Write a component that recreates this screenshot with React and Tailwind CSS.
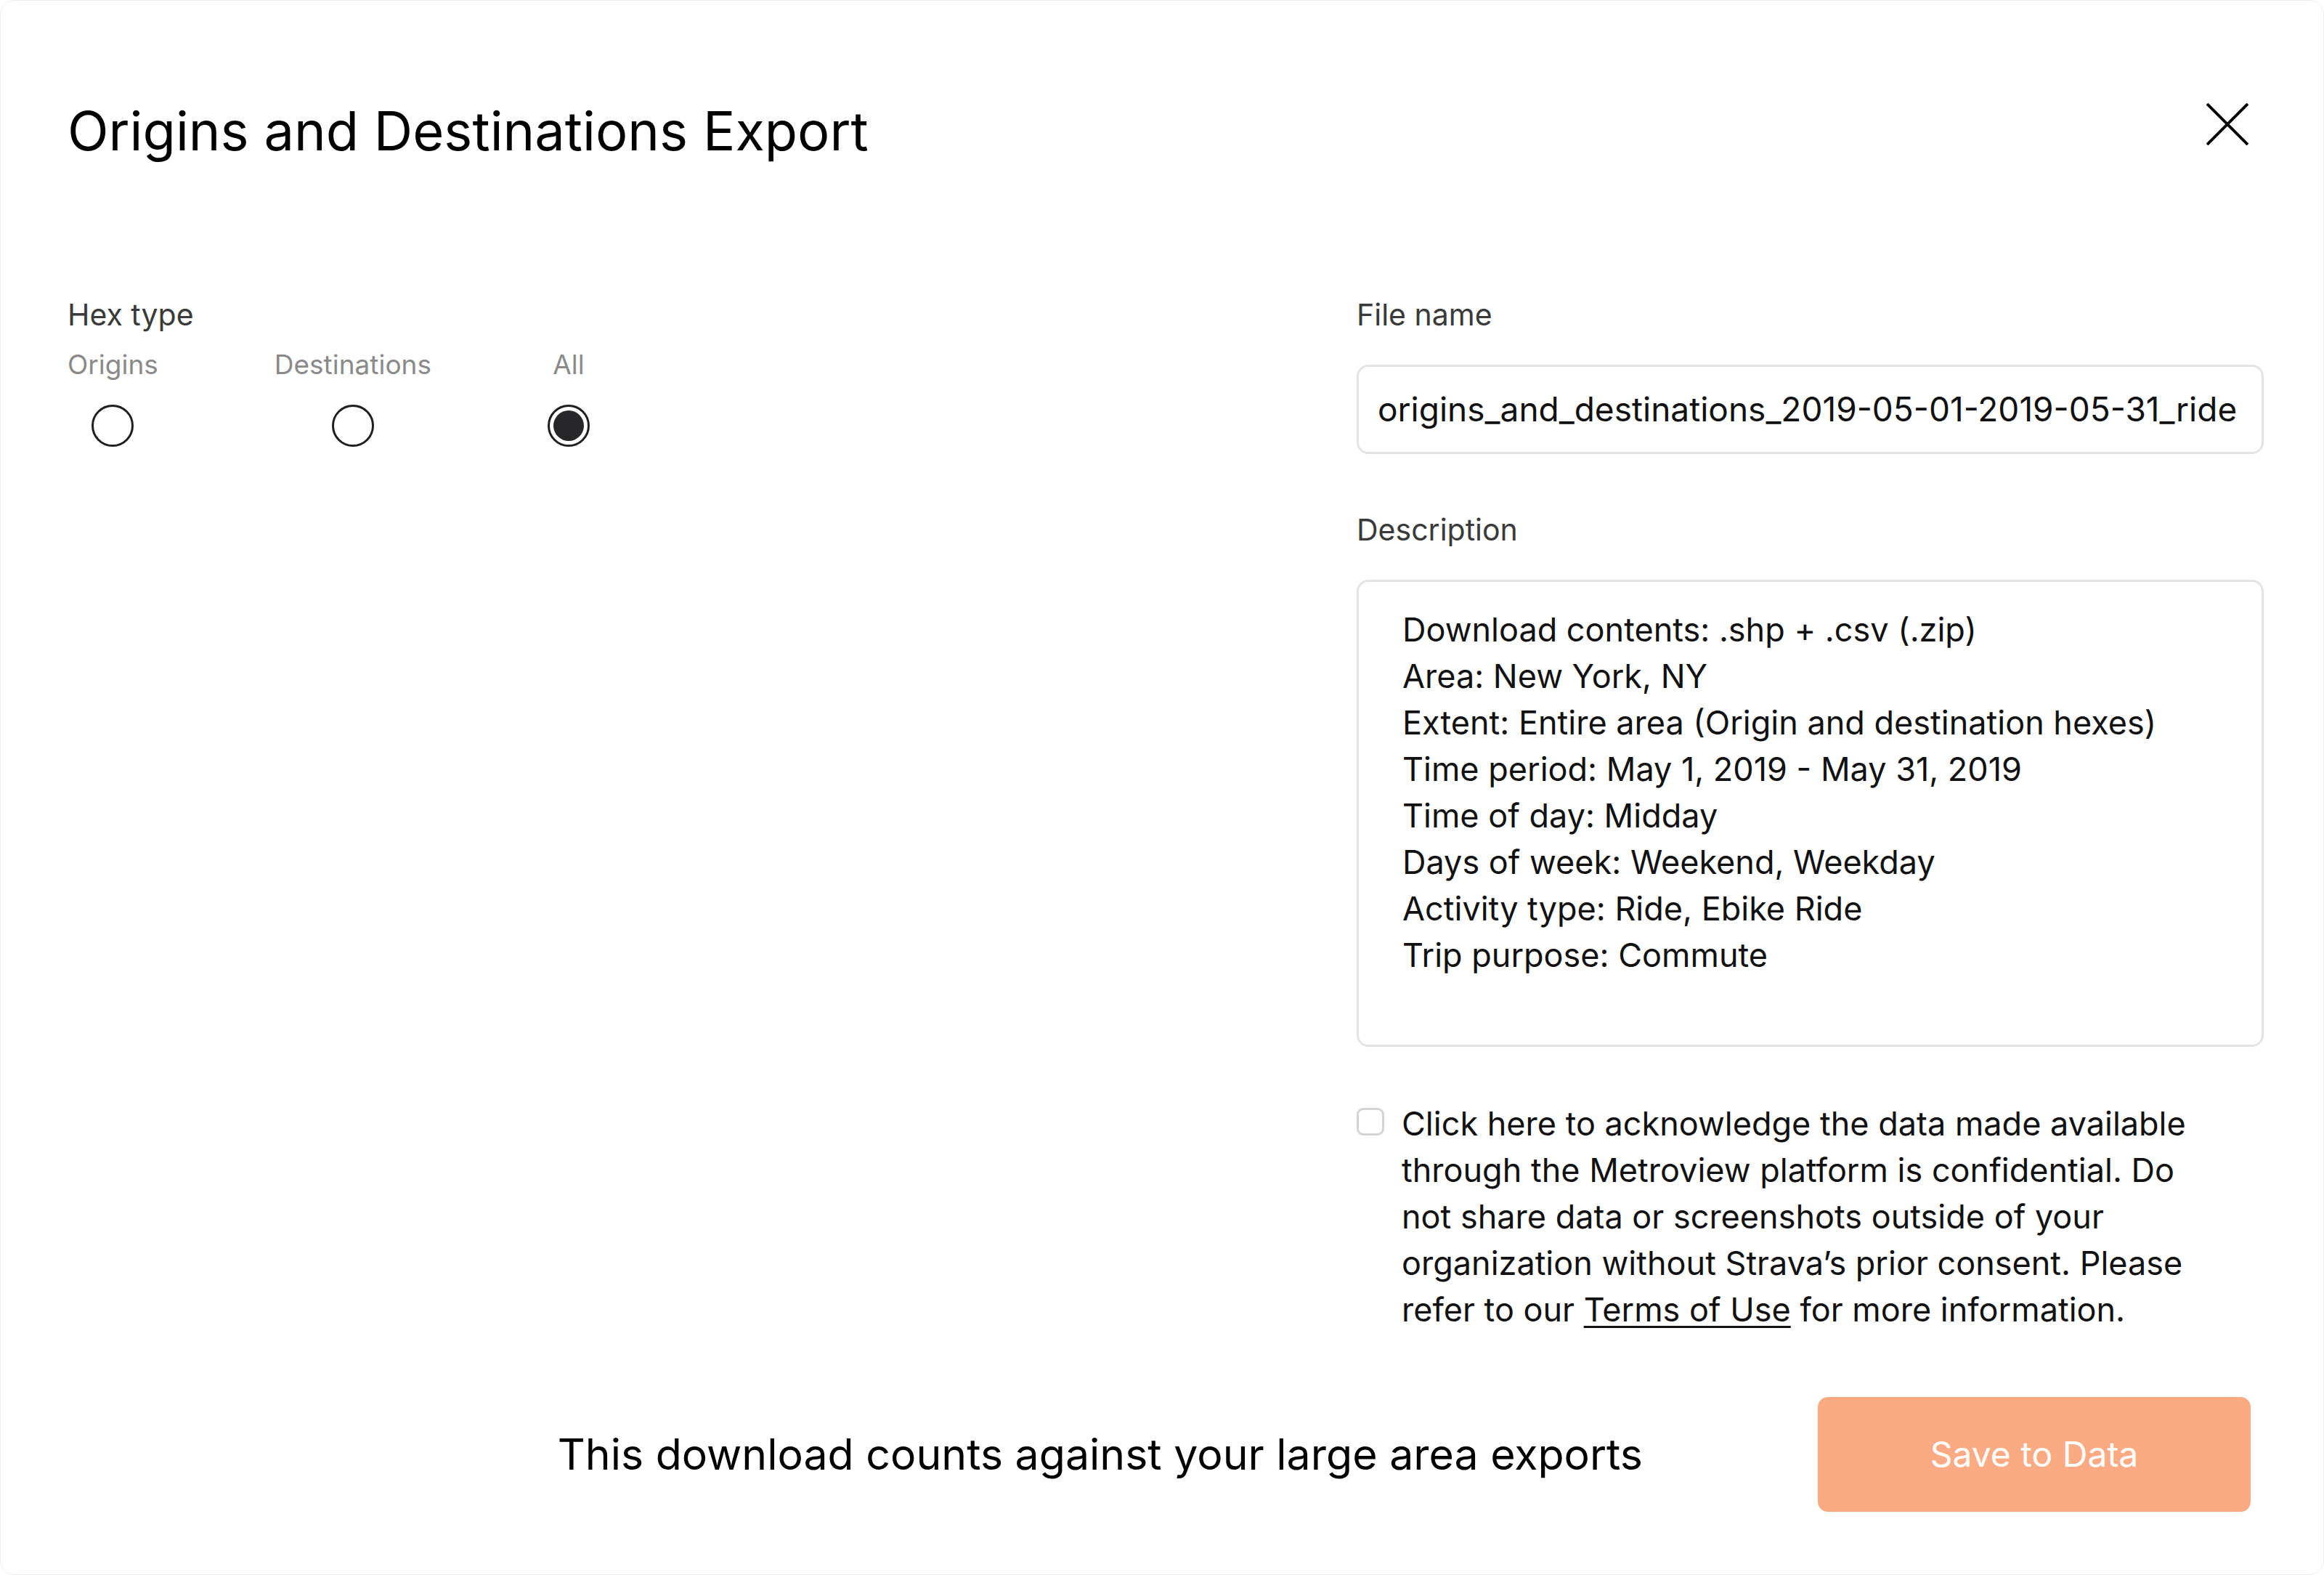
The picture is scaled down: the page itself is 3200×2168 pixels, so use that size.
import React, { useState } from "react";

const FONT = { fontFamily: "Inter, 'Noto Sans', 'Liberation Sans', sans-serif" };

function CloseIcon() {
  return (
    <svg width="58" height="58" viewBox="0 0 58 58" fill="none">
      <path d="M1 1 L57 57 M57 1 L1 57" stroke="#000" strokeWidth="4" />
    </svg>
  );
}

function Radio({ label, checked, onSelect }) {
  return (
    <button
      type="button"
      onClick={onSelect}
      className="flex flex-col items-center gap-[33px] bg-transparent p-0"
    >
      <span className="text-[37px] leading-[44px] text-[#8a8a8a]">{label}</span>
      <span className="flex h-[58px] w-[58px] items-center justify-center rounded-full border-[3px] border-[#1f1f22] bg-white">
        {checked && <span className="h-[42px] w-[42px] rounded-full bg-[#27272a]" />}
      </span>
    </button>
  );
}

const DESCRIPTION = [
  "Download contents: .shp + .csv (.zip)",
  "Area: New York, NY",
  "Extent: Entire area (Origin and destination hexes)",
  "Time period: May 1, 2019 - May 31, 2019",
  "Time of day: Midday",
  "Days of week: Weekend, Weekday",
  "Activity type: Ride, Ebike Ride",
  "Trip purpose: Commute",
];

export default function App() {
  const [hexType, setHexType] = useState("all");
  const [agreed, setAgreed] = useState(false);

  return (
    <div className="h-[2168px] w-[3200px] bg-white" style={FONT}>
      <div className="flex h-full w-full flex-col rounded-[20px] border border-[#eeeeee] bg-white">
        {/* Header */}
        <div className="flex items-start justify-between pl-[92px] pr-[103px] pt-[134px]">
          <h1 className="text-[74px] font-normal leading-[90px] text-black">
            Origins and Destinations Export
          </h1>
          <button type="button" className="mt-[7px] bg-transparent p-0">
            <CloseIcon />
          </button>
        </div>

        {/* Body */}
        <div className="mt-[184px] flex justify-between pl-[92px] pr-[82px]">
          {/* Hex type */}
          <div className="flex flex-col">
            <div className="text-[41px] leading-[48px] text-[#3a3a3a]">Hex type</div>
            <div className="mt-[23px] flex items-start gap-[160px]">
              <Radio label="Origins" checked={hexType === "origins"} onSelect={() => setHexType("origins")} />
              <Radio label="Destinations" checked={hexType === "destinations"} onSelect={() => setHexType("destinations")} />
              <Radio label="All" checked={hexType === "all"} onSelect={() => setHexType("all")} />
            </div>
          </div>

          {/* Export details */}
          <div className="flex w-[1249px] flex-col">
            <div className="text-[41px] leading-[48px] text-[#3a3a3a]">File name</div>
            <div className="mt-[45px] flex h-[123px] items-center rounded-[16px] border-[3px] border-[#e3e3e7] pl-[26px] text-[46px] text-[#111]">
              origins_and_destinations_2019-05-01-2019-05-31_ride
            </div>

            <div className="mt-[80px] text-[41px] leading-[48px] text-[#3a3a3a]">Description</div>
            <div className="mt-[45px] h-[643px] rounded-[16px] border-[3px] border-[#e3e3e7] pl-[60px] pt-[34px]">
              {DESCRIPTION.map((line) => (
                <div key={line} className="text-[45px] leading-[64px] text-[#111]">
                  {line}
                </div>
              ))}
            </div>

            <label className="mt-[74px] flex items-start gap-[24px]">
              <span
                onClick={() => setAgreed(!agreed)}
                className="mt-[10px] flex h-[38px] w-[38px] shrink-0 items-center justify-center rounded-[9px] border-[3px] border-[#d6d3d2] bg-white"
              >
                {agreed && <span className="h-[18px] w-[18px] rounded-[3px] bg-[#222]" />}
              </span>
              <span className="max-w-[1100px] text-[45px] leading-[64px] text-[#111]">
                Click here to acknowledge the data made available through the Metroview platform is
                confidential. Do not share data or screenshots outside of your organization without
                Strava’s prior consent. Please refer to our{" "}
                <a className="underline decoration-[3px] underline-offset-[6px]">Terms of Use</a> for more
                information.
              </span>
            </label>
          </div>
        </div>

        {/* Footer */}
        <div className="mt-[88px] flex items-center justify-end gap-[241px] pr-[100px]">
          <div className="text-[59px] leading-[70px] text-black">
            This download counts against your large area exports
          </div>
          <button
            type="button"
            className="flex h-[158px] w-[596px] items-center justify-center rounded-[14px] bg-[#fcaa83] text-[48px] text-white"
          >
            Save to Data
          </button>
        </div>
      </div>
    </div>
  );
}
